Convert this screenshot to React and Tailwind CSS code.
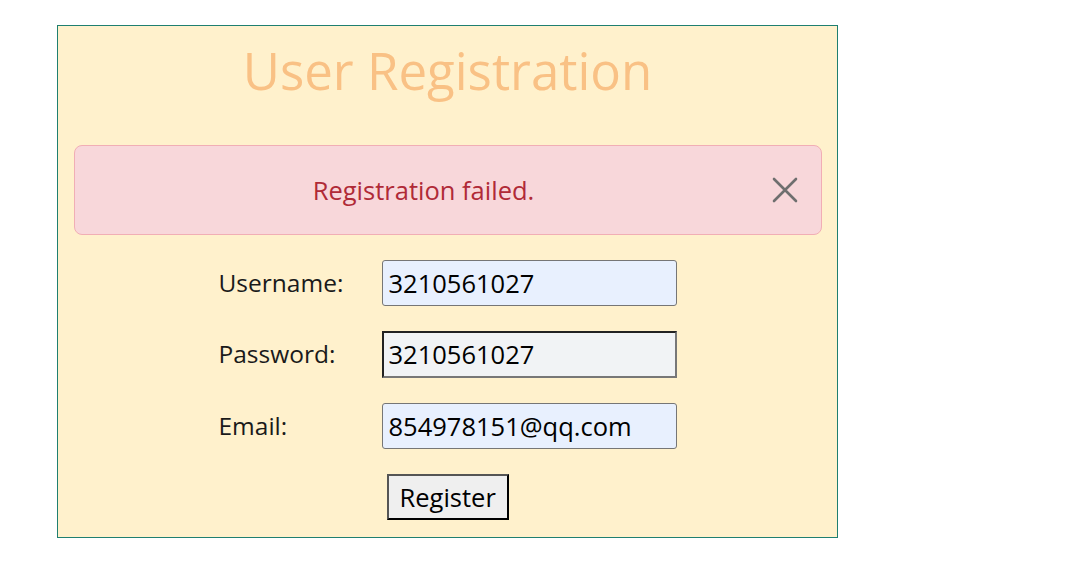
import React, { useState } from 'react'

const Field = ({ label, value, focused }) => (
  <div className="flex items-center h-[46px]">
    <label className="w-[163px] text-[24.5px] text-[#1a1a1a]">{label}</label>
    <input
      readOnly
      value={value}
      className={
        focused
          ? "w-[295px] h-[47px] px-[5px] text-[25.5px] text-black bg-[#f1f3f5] border-2 border-t-[#222] border-l-[#222] border-b-[#777] border-r-[#777] outline-none"
          : "w-[295px] h-[46px] px-[6px] text-[25.5px] text-black bg-[#e8f0fe] border border-[#767676] rounded-[3px] outline-none"
      }
    />
  </div>
)

const App = () => {
  const [showAlert, setShowAlert] = useState(true)

  return (
    <div className="w-[1070px] h-[573px] bg-white pt-[25px] pl-[57px]" style={{ fontFamily: '"Open Sans", "Noto Sans", sans-serif' }}>
      <div className="w-[781px] h-[513px] bg-[#fff1cc] border border-[#1f7f70] flex flex-col items-center">
        {/* Title */}
        <h1 className="mt-[11px] text-[51px] leading-[66px] text-[#f9c185]">User Registration</h1>

        {/* Alert */}
        {showAlert && (
          <div className="mt-[42px] w-[748px] h-[90px] bg-[#f8d7da] border border-[#f1aeb5] rounded-[8px] flex items-center pl-[16px] pr-[20px]">
            <span className="flex-1 text-center text-[25.5px] text-[#b02a37] pr-[12px]">Registration failed.</span>
            <button onClick={() => setShowAlert(false)} className="w-[32px] h-[32px] flex items-center justify-center">
              <svg width="28" height="28" viewBox="0 0 28 28" fill="none" stroke="#6f6f6f" strokeWidth="2.6" strokeLinecap="round">
                <path d="M3 3 L25 25 M25 3 L3 25" />
              </svg>
            </button>
          </div>
        )}

        {/* Form */}
        <form className="mt-[25px] flex flex-col gap-[25px]" onSubmit={(e) => e.preventDefault()}>
          <Field label="Username:" value="3210561027" />
          <Field label="Password:" value="3210561027" focused />
          <div className="pt-[1px]">
            <Field label="Email:" value="854978151@qq.com" />
          </div>
          <div className="pl-[168px]">
            <button className="h-[46px] px-[11px] text-[25.5px] text-black bg-[#efefef] border-2 border-t-[#555] border-l-[#555] border-b-black border-r-black">Register</button>
          </div>
        </form>
      </div>
    </div>
  )
}

export default App
